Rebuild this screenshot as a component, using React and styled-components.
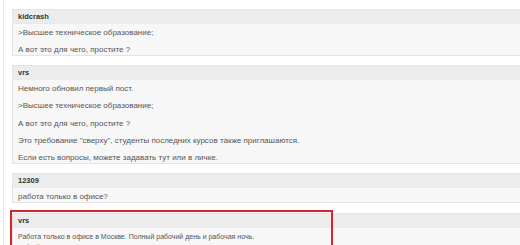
import React from "react";
import styled, { createGlobalStyle } from "styled-components";

const Global = createGlobalStyle`
  body {
    margin: 0;
    background: #fff;
    overflow: hidden;
    font-family: "Liberation Sans", Arial, sans-serif;
  }
`;

const Thread = styled.div`
  margin-left: 3px;
  border-left: 1px solid #e6e6e6;
  padding: 9px 0 0 8px;
  width: 600px;
  min-height: 260px;
`;

const PostWrap = styled.div`
  position: relative;
  margin-bottom: ${props => props.gap || 9}px;
`;

const Post = styled.div`
  border: 1px solid #e4e4e4;
  background: #f7f7f7;
`;

const Author = styled.div`
  height: 13px;
  line-height: 13px;
  padding: 0 5px;
  background: #ececec;
  border-bottom: 1px solid #e9e9e9;
  font-size: 7.5px;
  font-weight: bold;
  color: #333;
`;

const Body = styled.div`
  padding: 3px 5px 0;
  display: flex;
  flex-direction: column;
  gap: 6.2px;
`;

const Para = styled.p`
  margin: 0;
  font-size: ${props => props.size || 8}px;
  line-height: 11px;
  color: #555;
`;

const Highlight = styled.div`
  position: absolute;
  left: -2px;
  top: -3px;
  box-sizing: border-box;
  width: 323px;
  height: 60px;
  border: 2px solid #d7262b;
  pointer-events: none;
`;

const posts = [
  {
    author: "kidcrash",
    lines: [">Высшее техническое образование;", "А вот это для чего, простите ?"],
  },
  {
    author: "vrs",
    lines: [
      "Немного обновил первый пост.",
      ">Высшее техническое образование;",
      "А вот это для чего, простите ?",
      "Это требование \"сверху\", студенты последних курсов также приглашаются.",
      "Если есть вопросы, можете задавать тут или в личке.",
    ],
  },
  {
    author: "12309",
    lines: ["работа только в офисе?"],
    gap: 10,
  },
];

export default function App() {
  return (
    <>
      <Global />
      <Thread>
        {posts.map(p => (
          <PostWrap key={p.author + p.lines.length} gap={p.gap}>
            <Post>
              <Author>{p.author}</Author>
              <Body>
                {p.lines.map((l, i) => (
                  <Para key={i}>{l}</Para>
                ))}
              </Body>
            </Post>
          </PostWrap>
        ))}
        <PostWrap>
          <Post>
            <Author>vrs</Author>
            <Body>
              <Para size={7}>
                Работа только в офисе в Москве. Полный рабочий день и рабочая ночь.
                <br />
                Гибкий график.
              </Para>
            </Body>
          </Post>
          <Highlight />
        </PostWrap>
      </Thread>
    </>
  );
}
